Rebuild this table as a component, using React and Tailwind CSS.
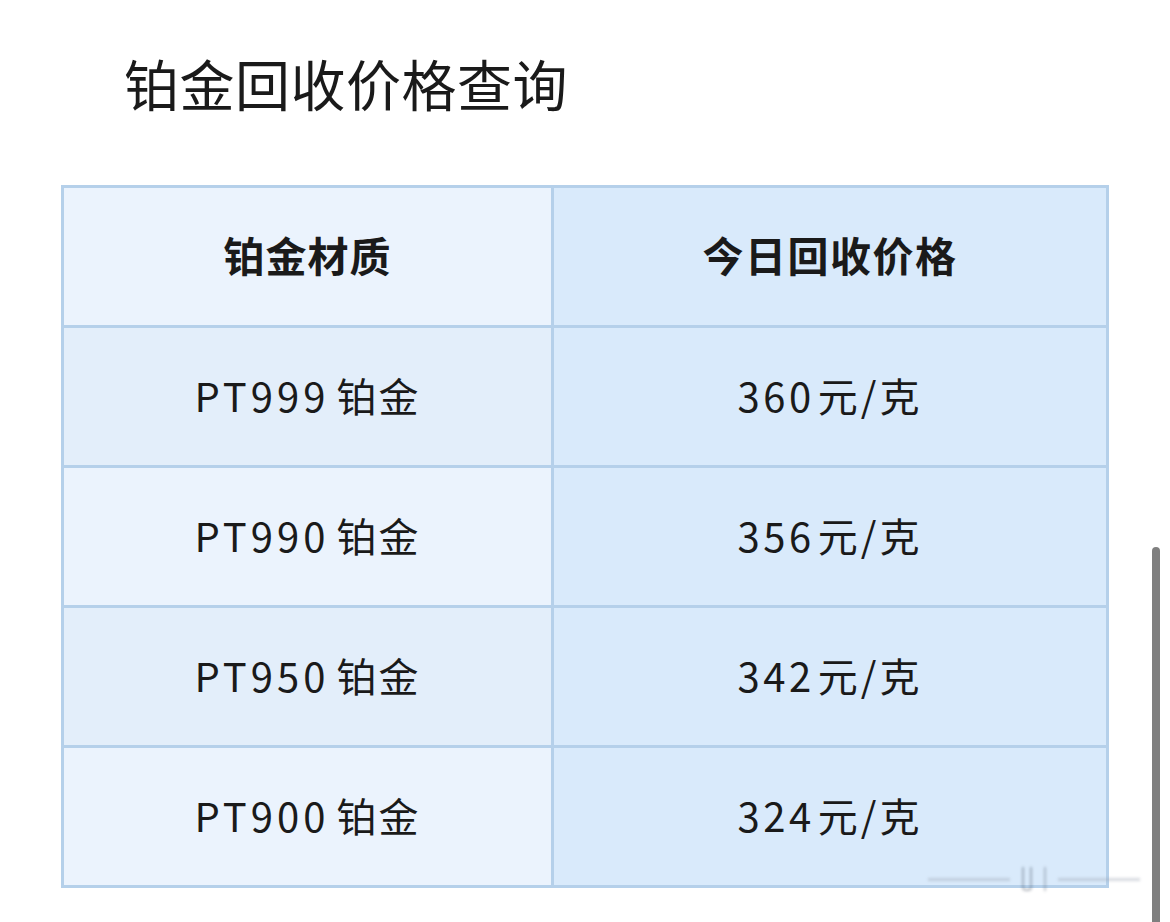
const rows = [
    { code: 'PT999', price: '360', dark: true },
    { code: 'PT990', price: '356', dark: false },
    { code: 'PT950', price: '342', dark: true },
    { code: 'PT900', price: '324', dark: false },
]

const font = { fontFamily: '"Noto Sans CJK SC", "Noto Sans", sans-serif' }

const App = () => {
    return (
        <div
            className="relative w-[1170px] h-[922px] bg-white overflow-hidden text-[#1a1a1a]"
            style={font}>
            <h1 className="pl-[124px] pt-[55px] text-[55px] leading-none font-normal tracking-[0.5px]">
                铂金回收价格查询
            </h1>

            <div className="ml-[61px] mt-[75px] w-[1048px] grid grid-cols-[487px_1fr] gap-[3px] p-[3px] bg-[#b5d0ea]">
                <div className="h-[137px] pb-[3px] flex items-center justify-center bg-[#ebf3fd] text-[41px] font-bold tracking-[1px]">
                    铂金材质
                </div>
                <div className="h-[137px] pb-[3px] flex items-center justify-center bg-[#d9eafb] text-[41px] font-bold tracking-[1.5px]">
                    今日回收价格
                </div>
                {rows.map(row => (
                    <div key={row.code} className="contents">
                        <div
                            className={`h-[137px] pb-[4px] flex items-center justify-center text-[40px] ${row.dark ? 'bg-[#e3eefa]' : 'bg-[#ebf3fd]'}`}>
                            <span className="tracking-[4px]">{row.code}</span>
                            <span className="ml-[7px] tracking-[2px]">铂金</span>
                        </div>
                        <div className="h-[137px] pb-[4px] flex items-center justify-center bg-[#d9eafb] text-[40px]">
                            <span className="tracking-[3.5px]">{row.price}</span>
                            <span className="ml-[3px] tracking-[3px]">元/克</span>
                        </div>
                    </div>
                ))}
            </div>

            <div className="absolute left-[928px] top-[866px] w-[212px] h-[26px] flex items-center gap-3 opacity-40 blur-[1.5px]">
                <div className="h-[3px] flex-1 bg-gray-400" />
                <div className="h-[24px] w-[10px] border-2 border-t-0 border-gray-600 rounded-b" />
                <div className="h-[24px] w-[2px] bg-gray-500" />
                <div className="h-[3px] flex-1 bg-gray-400" />
            </div>

            <div className="absolute left-[1152px] top-[547px] w-[8px] h-[400px] rounded-full bg-[#7f7f7f]" />
        </div>
    )
}

export default App
